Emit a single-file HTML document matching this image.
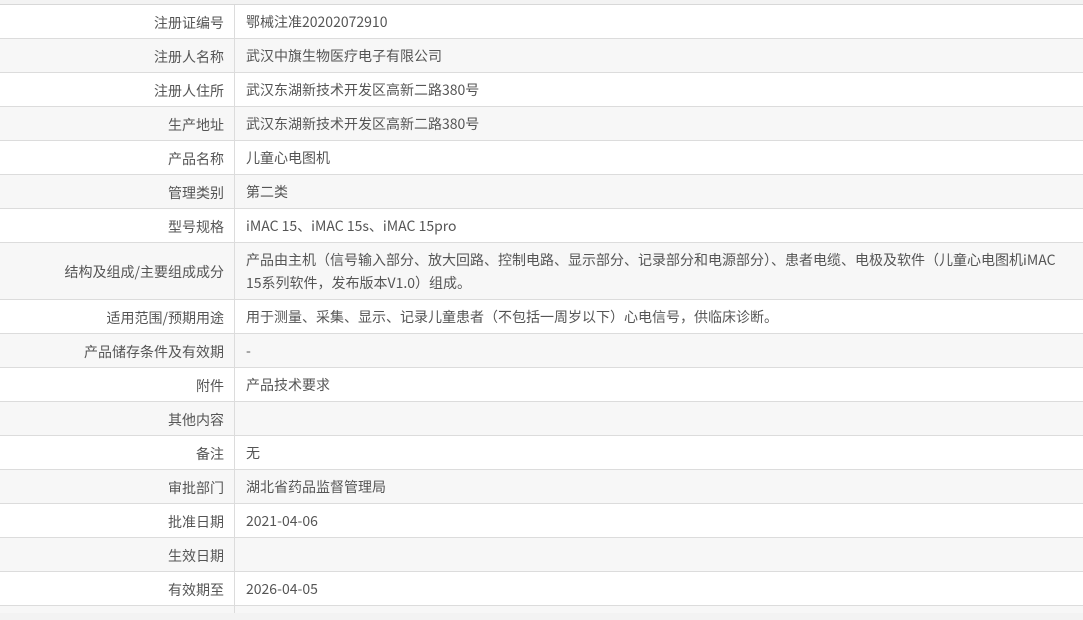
<!DOCTYPE html>
<html><head><meta charset="utf-8"><style>
html,body{margin:0;padding:0;width:1083px;height:620px;overflow:hidden;background:#f3f3f3;}
body{font-family:"Noto Sans CJK SC","Liberation Sans",sans-serif;font-size:14px;color:#555;}
.wrap{position:absolute;left:0;top:4px;width:1083px;height:608px;background:#fff;border-top:1px solid #d8d8d8;}
.row{position:absolute;left:0;width:1083px;border-bottom:1px solid #dcdcdc;box-sizing:border-box;}
.row.g{background:#f7f7f7;}
.l{position:absolute;left:0;top:0;bottom:0;width:235px;border-right:1px solid #dcdcdc;box-sizing:border-box;text-align:right;padding-right:10px;padding-top:2px;display:flex;align-items:center;justify-content:flex-end;}
.v{position:absolute;left:246px;right:8px;top:0;bottom:0;padding-top:2px;display:flex;align-items:center;line-height:23px;}
</style></head><body>
<div class="wrap">
<div class="row" style="top:0;height:34px"><div class="l">注册证编号</div><div class="v">鄂械注准20202072910</div></div>
<div class="row g" style="top:34px;height:34px"><div class="l">注册人名称</div><div class="v">武汉中旗生物医疗电子有限公司</div></div>
<div class="row" style="top:68px;height:34px"><div class="l">注册人住所</div><div class="v">武汉东湖新技术开发区高新二路380号</div></div>
<div class="row g" style="top:102px;height:34px"><div class="l">生产地址</div><div class="v">武汉东湖新技术开发区高新二路380号</div></div>
<div class="row" style="top:136px;height:34px"><div class="l">产品名称</div><div class="v">儿童心电图机</div></div>
<div class="row g" style="top:170px;height:34px"><div class="l">管理类别</div><div class="v">第二类</div></div>
<div class="row" style="top:204px;height:34px"><div class="l">型号规格</div><div class="v">iMAC 15、iMAC 15s、iMAC 15pro</div></div>
<div class="row g" style="top:238px;height:57px"><div class="l">结构及组成/主要组成成分</div><div class="v"><div style="white-space:nowrap">产品由主机（信号输入部分、放大回路、控制电路、显示部分、记录部分和电源部分）、患者电缆、电极及软件（儿童心电图机iMAC<br>15系列软件，发布版本V1.0）组成。</div></div></div>
<div class="row" style="top:295px;height:34px"><div class="l">适用范围/预期用途</div><div class="v">用于测量、采集、显示、记录儿童患者（不包括一周岁以下）心电信号，供临床诊断。</div></div>
<div class="row g" style="top:329px;height:34px"><div class="l">产品储存条件及有效期</div><div class="v">-</div></div>
<div class="row" style="top:363px;height:34px"><div class="l">附件</div><div class="v">产品技术要求</div></div>
<div class="row g" style="top:397px;height:34px"><div class="l">其他内容</div><div class="v"></div></div>
<div class="row" style="top:431px;height:34px"><div class="l">备注</div><div class="v">无</div></div>
<div class="row g" style="top:465px;height:34px"><div class="l">审批部门</div><div class="v">湖北省药品监督管理局</div></div>
<div class="row" style="top:499px;height:34px"><div class="l">批准日期</div><div class="v">2021-04-06</div></div>
<div class="row g" style="top:533px;height:34px"><div class="l">生效日期</div><div class="v"></div></div>
<div class="row" style="top:567px;height:34px"><div class="l">有效期至</div><div class="v">2026-04-05</div></div>
<div class="row g" style="top:601px;height:7px;border-bottom:none"><div class="l"></div></div>
</div>
</body></html>
